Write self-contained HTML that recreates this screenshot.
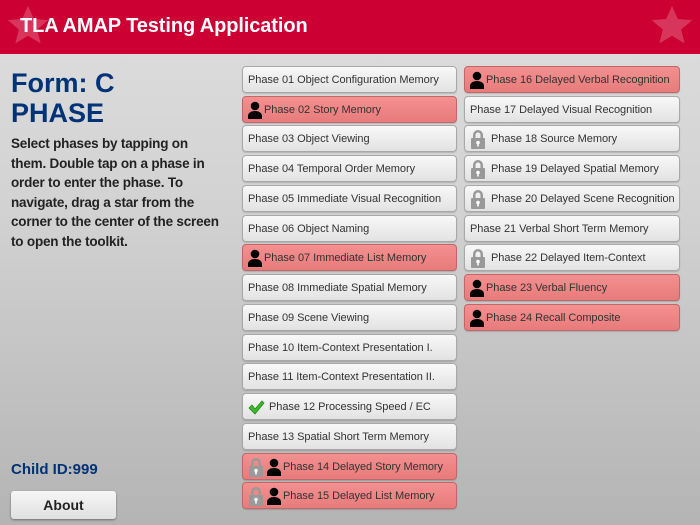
<!DOCTYPE html>
<html><head><meta charset="utf-8"><style>
*{margin:0;padding:0;box-sizing:border-box}
body{width:700px;height:525px;overflow:hidden;font-family:"Liberation Sans",sans-serif;background:linear-gradient(#dedede,#d2d2d2 40%,#b4b4b4);position:relative}
.hd{position:absolute;left:0;top:0;width:700px;height:54px;background:#cc0033}
.hd h1{position:absolute;left:20px;top:15px;color:#fff;font-size:20px;font-weight:bold;letter-spacing:-0.1px}
.star{position:absolute}
.t{position:absolute;left:11px;color:#003377;font-weight:bold}
.b{position:absolute;height:27px;border:1px solid #a8a8a8;border-radius:4px;background:linear-gradient(#f8f8f8,#e2e2e2);font-size:11px;color:#333;line-height:25px;padding-left:5px;padding-top:1px;white-space:nowrap;display:flex;align-items:center;box-shadow:0 1px 1px rgba(0,0,0,.15);letter-spacing:-0.05px}
.r{background:linear-gradient(#f49090,#e87b7b);border-color:#c06868}
.L{left:242px;width:215px}.R{left:464px;width:216px}
svg{flex:none;margin-right:2px}
</style></head><body>
<div class="hd">
<svg class="star" style="left:6px;top:4px" width="44" height="44" viewBox="0 0 24 24"><path d="M12 1l3.2 7.2 7.8.6-6 5.1 1.9 7.6L12 17.4 5.1 21.5 7 13.9 1 8.8l7.8-.6z" fill="#d8355c"/></svg>
<svg class="star" style="left:650px;top:4px" width="44" height="44" viewBox="0 0 24 24"><path d="M12 1l3.2 7.2 7.8.6-6 5.1 1.9 7.6L12 17.4 5.1 21.5 7 13.9 1 8.8l7.8-.6z" fill="#d8355c"/></svg>
<h1>TLA AMAP Testing Application</h1></div>
<div class="t" style="top:68px;font-size:27px;line-height:30px">Form: C<br>PHASE</div>
<div class="t" style="top:134px;font-size:13.5px;line-height:19.5px;color:#222;white-space:nowrap;letter-spacing:-0.2px">Select phases by tapping on<br>them. Double tap on a phase in<br>order to enter the phase. To<br>navigate, drag a star from the<br>corner to the center of the screen<br>to open the toolkit.</div>
<div class="t" style="top:461px;font-size:15px">Child ID:999</div>
<div style="position:absolute;left:11px;top:491px;width:105px;height:28px;border-radius:3px;background:linear-gradient(#f6f6f6,#e0e0e0);box-shadow:0 1px 2px rgba(0,0,0,.4);text-align:center;line-height:28px;font-weight:bold;font-size:14px;color:#222">About</div>

<div class="b L" style="top:66px">Phase 01 Object Configuration Memory</div>
<div class="b L r" style="top:96px"><svg width="14" height="18" viewBox="0 0 14 18"><circle cx="7" cy="5" r="4.3"/><path d="M0 18v-3c0-3 3-5 7-5s7 2 7 5v3z"/></svg>Phase 02 Story Memory</div>
<div class="b L" style="top:125px">Phase 03 Object Viewing</div>
<div class="b L" style="top:155px">Phase 04 Temporal Order Memory</div>
<div class="b L" style="top:185px">Phase 05 Immediate Visual Recognition</div>
<div class="b L" style="top:215px">Phase 06 Object Naming</div>
<div class="b L r" style="top:244px"><svg width="14" height="18" viewBox="0 0 14 18"><circle cx="7" cy="5" r="4.3"/><path d="M0 18v-3c0-3 3-5 7-5s7 2 7 5v3z"/></svg>Phase 07 Immediate List Memory</div>
<div class="b L" style="top:274px">Phase 08 Immediate Spatial Memory</div>
<div class="b L" style="top:304px">Phase 09 Scene Viewing</div>
<div class="b L" style="top:334px">Phase 10 Item-Context Presentation I.</div>
<div class="b L" style="top:363px">Phase 11 Item-Context Presentation II.</div>
<div class="b L" style="top:393px"><svg width="17" height="15" viewBox="0 0 17 15" style="margin-right:4px"><path d="M1 8l3-3 3 4 7-8 2 2-9 11z" fill="#3cb82c" stroke="#2a8a1e" stroke-width=".8"/></svg>Phase 12 Processing Speed / EC</div>
<div class="b L" style="top:423px">Phase 13 Spatial Short Term Memory</div>
<div class="b L r" style="top:453px"><svg width="16" height="20" viewBox="0 0 16 20" style="margin-right:3px"><path d="M3 9V6a5 5 0 0 1 10 0v3h-2.5V6a2.5 2.5 0 0 0-5 0v3z" fill="#999"/><rect x="1" y="9" width="14" height="11" rx="1" fill="#999"/><circle cx="8" cy="13.5" r="1.8" fill="#fff"/><rect x="7.2" y="14" width="1.6" height="3.5" fill="#fff"/></svg><svg width="14" height="18" viewBox="0 0 14 18"><circle cx="7" cy="5" r="4.3"/><path d="M0 18v-3c0-3 3-5 7-5s7 2 7 5v3z"/></svg>Phase 14 Delayed Story Memory</div>
<div class="b L r" style="top:482px"><svg width="16" height="20" viewBox="0 0 16 20" style="margin-right:3px"><path d="M3 9V6a5 5 0 0 1 10 0v3h-2.5V6a2.5 2.5 0 0 0-5 0v3z" fill="#999"/><rect x="1" y="9" width="14" height="11" rx="1" fill="#999"/><circle cx="8" cy="13.5" r="1.8" fill="#fff"/><rect x="7.2" y="14" width="1.6" height="3.5" fill="#fff"/></svg><svg width="14" height="18" viewBox="0 0 14 18"><circle cx="7" cy="5" r="4.3"/><path d="M0 18v-3c0-3 3-5 7-5s7 2 7 5v3z"/></svg>Phase 15 Delayed List Memory</div>

<div class="b R r" style="top:66px"><svg width="14" height="18" viewBox="0 0 14 18"><circle cx="7" cy="5" r="4.3"/><path d="M0 18v-3c0-3 3-5 7-5s7 2 7 5v3z"/></svg>Phase 16 Delayed Verbal Recognition</div>
<div class="b R" style="top:96px">Phase 17 Delayed Visual Recognition</div>
<div class="b R" style="top:125px"><svg width="16" height="20" viewBox="0 0 16 20" style="margin-right:5px"><path d="M3 9V6a5 5 0 0 1 10 0v3h-2.5V6a2.5 2.5 0 0 0-5 0v3z" fill="#999"/><rect x="1" y="9" width="14" height="11" rx="1" fill="#999"/><circle cx="8" cy="13.5" r="1.8" fill="#fff"/><rect x="7.2" y="14" width="1.6" height="3.5" fill="#fff"/></svg>Phase 18 Source Memory</div>
<div class="b R" style="top:155px"><svg width="16" height="20" viewBox="0 0 16 20" style="margin-right:5px"><path d="M3 9V6a5 5 0 0 1 10 0v3h-2.5V6a2.5 2.5 0 0 0-5 0v3z" fill="#999"/><rect x="1" y="9" width="14" height="11" rx="1" fill="#999"/><circle cx="8" cy="13.5" r="1.8" fill="#fff"/><rect x="7.2" y="14" width="1.6" height="3.5" fill="#fff"/></svg>Phase 19 Delayed Spatial Memory</div>
<div class="b R" style="top:185px"><svg width="16" height="20" viewBox="0 0 16 20" style="margin-right:5px"><path d="M3 9V6a5 5 0 0 1 10 0v3h-2.5V6a2.5 2.5 0 0 0-5 0v3z" fill="#999"/><rect x="1" y="9" width="14" height="11" rx="1" fill="#999"/><circle cx="8" cy="13.5" r="1.8" fill="#fff"/><rect x="7.2" y="14" width="1.6" height="3.5" fill="#fff"/></svg>Phase 20 Delayed Scene Recognition</div>
<div class="b R" style="top:215px">Phase 21 Verbal Short Term Memory</div>
<div class="b R" style="top:244px"><svg width="16" height="20" viewBox="0 0 16 20" style="margin-right:5px"><path d="M3 9V6a5 5 0 0 1 10 0v3h-2.5V6a2.5 2.5 0 0 0-5 0v3z" fill="#999"/><rect x="1" y="9" width="14" height="11" rx="1" fill="#999"/><circle cx="8" cy="13.5" r="1.8" fill="#fff"/><rect x="7.2" y="14" width="1.6" height="3.5" fill="#fff"/></svg>Phase 22 Delayed Item-Context</div>
<div class="b R r" style="top:274px"><svg width="14" height="18" viewBox="0 0 14 18"><circle cx="7" cy="5" r="4.3"/><path d="M0 18v-3c0-3 3-5 7-5s7 2 7 5v3z"/></svg>Phase 23 Verbal Fluency</div>
<div class="b R r" style="top:304px"><svg width="14" height="18" viewBox="0 0 14 18"><circle cx="7" cy="5" r="4.3"/><path d="M0 18v-3c0-3 3-5 7-5s7 2 7 5v3z"/></svg>Phase 24 Recall Composite</div>
</body></html>
